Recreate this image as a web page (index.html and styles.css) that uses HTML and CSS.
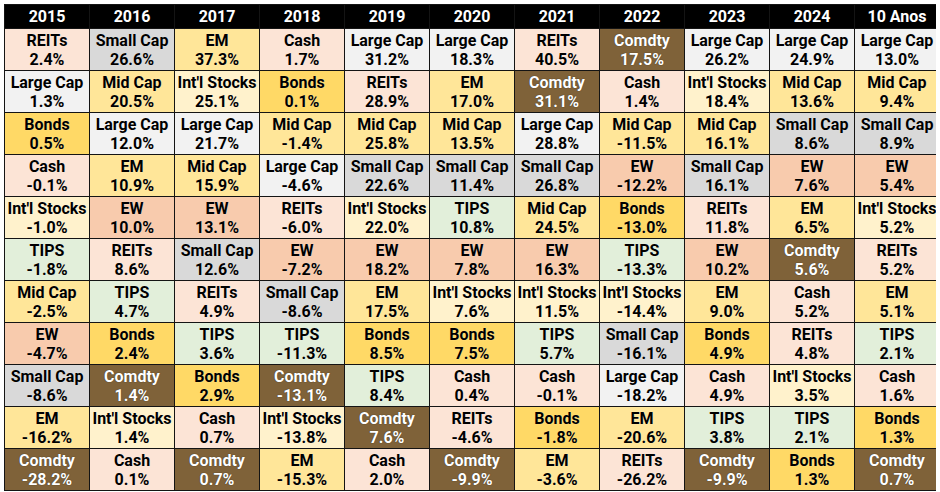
FILE: index.html
```html
<!DOCTYPE html>
<html lang="pt">
<head>
<meta charset="utf-8">
<title>Retornos por classe de ativo</title>
<link rel="stylesheet" href="styles.css">
</head>
<body>
<div class="grid">
  <div class="hd">2015</div><div class="hd">2016</div><div class="hd">2017</div><div class="hd">2018</div><div class="hd">2019</div><div class="hd">2020</div><div class="hd">2021</div><div class="hd">2022</div><div class="hd">2023</div><div class="hd">2024</div><div class="hd">10 Anos</div>

  <div class="c reits">REITs<br>2.4%</div><div class="c small">Small Cap<br>26.6%</div><div class="c em">EM<br>37.3%</div><div class="c cash">Cash<br>1.7%</div><div class="c large">Large Cap<br>31.2%</div><div class="c large">Large Cap<br>18.3%</div><div class="c reits">REITs<br>40.5%</div><div class="c comdty">Comdty<br>17.5%</div><div class="c large">Large Cap<br>26.2%</div><div class="c large">Large Cap<br>24.9%</div><div class="c large">Large Cap<br>13.0%</div>

  <div class="c large">Large Cap<br>1.3%</div><div class="c mid">Mid Cap<br>20.5%</div><div class="c intl">Int'l Stocks<br>25.1%</div><div class="c bonds">Bonds<br>0.1%</div><div class="c reits">REITs<br>28.9%</div><div class="c em">EM<br>17.0%</div><div class="c comdty">Comdty<br>31.1%</div><div class="c cash">Cash<br>1.4%</div><div class="c intl">Int'l Stocks<br>18.4%</div><div class="c mid">Mid Cap<br>13.6%</div><div class="c mid">Mid Cap<br>9.4%</div>

  <div class="c bonds">Bonds<br>0.5%</div><div class="c large">Large Cap<br>12.0%</div><div class="c large">Large Cap<br>21.7%</div><div class="c mid">Mid Cap<br>-1.4%</div><div class="c mid">Mid Cap<br>25.8%</div><div class="c mid">Mid Cap<br>13.5%</div><div class="c large">Large Cap<br>28.8%</div><div class="c mid">Mid Cap<br>-11.5%</div><div class="c mid">Mid Cap<br>16.1%</div><div class="c small">Small Cap<br>8.6%</div><div class="c small">Small Cap<br>8.9%</div>

  <div class="c cash">Cash<br>-0.1%</div><div class="c em">EM<br>10.9%</div><div class="c mid">Mid Cap<br>15.9%</div><div class="c large">Large Cap<br>-4.6%</div><div class="c small">Small Cap<br>22.6%</div><div class="c small">Small Cap<br>11.4%</div><div class="c small">Small Cap<br>26.8%</div><div class="c ew">EW<br>-12.2%</div><div class="c small">Small Cap<br>16.1%</div><div class="c ew">EW<br>7.6%</div><div class="c ew">EW<br>5.4%</div>

  <div class="c intl">Int'l Stocks<br>-1.0%</div><div class="c ew">EW<br>10.0%</div><div class="c ew">EW<br>13.1%</div><div class="c reits">REITs<br>-6.0%</div><div class="c intl">Int'l Stocks<br>22.0%</div><div class="c tips">TIPS<br>10.8%</div><div class="c mid">Mid Cap<br>24.5%</div><div class="c bonds">Bonds<br>-13.0%</div><div class="c reits">REITs<br>11.8%</div><div class="c em">EM<br>6.5%</div><div class="c intl">Int'l Stocks<br>5.2%</div>

  <div class="c tips">TIPS<br>-1.8%</div><div class="c reits">REITs<br>8.6%</div><div class="c small">Small Cap<br>12.6%</div><div class="c ew">EW<br>-7.2%</div><div class="c ew">EW<br>18.2%</div><div class="c ew">EW<br>7.8%</div><div class="c ew">EW<br>16.3%</div><div class="c tips">TIPS<br>-13.3%</div><div class="c ew">EW<br>10.2%</div><div class="c comdty">Comdty<br>5.6%</div><div class="c reits">REITs<br>5.2%</div>

  <div class="c mid">Mid Cap<br>-2.5%</div><div class="c tips">TIPS<br>4.7%</div><div class="c reits">REITs<br>4.9%</div><div class="c small">Small Cap<br>-8.6%</div><div class="c em">EM<br>17.5%</div><div class="c intl">Int'l Stocks<br>7.6%</div><div class="c intl">Int'l Stocks<br>11.5%</div><div class="c intl">Int'l Stocks<br>-14.4%</div><div class="c em">EM<br>9.0%</div><div class="c cash">Cash<br>5.2%</div><div class="c em">EM<br>5.1%</div>

  <div class="c ew">EW<br>-4.7%</div><div class="c bonds">Bonds<br>2.4%</div><div class="c tips">TIPS<br>3.6%</div><div class="c tips">TIPS<br>-11.3%</div><div class="c bonds">Bonds<br>8.5%</div><div class="c bonds">Bonds<br>7.5%</div><div class="c tips">TIPS<br>5.7%</div><div class="c small">Small Cap<br>-16.1%</div><div class="c bonds">Bonds<br>4.9%</div><div class="c reits">REITs<br>4.8%</div><div class="c tips">TIPS<br>2.1%</div>

  <div class="c small">Small Cap<br>-8.6%</div><div class="c comdty">Comdty<br>1.4%</div><div class="c bonds">Bonds<br>2.9%</div><div class="c comdty">Comdty<br>-13.1%</div><div class="c tips">TIPS<br>8.4%</div><div class="c cash">Cash<br>0.4%</div><div class="c cash">Cash<br>-0.1%</div><div class="c large">Large Cap<br>-18.2%</div><div class="c cash">Cash<br>4.9%</div><div class="c intl">Int'l Stocks<br>3.5%</div><div class="c cash">Cash<br>1.6%</div>

  <div class="c em">EM<br>-16.2%</div><div class="c intl">Int'l Stocks<br>1.4%</div><div class="c cash">Cash<br>0.7%</div><div class="c intl">Int'l Stocks<br>-13.8%</div><div class="c comdty">Comdty<br>7.6%</div><div class="c reits">REITs<br>-4.6%</div><div class="c bonds">Bonds<br>-1.8%</div><div class="c em">EM<br>-20.6%</div><div class="c tips">TIPS<br>3.8%</div><div class="c tips">TIPS<br>2.1%</div><div class="c bonds">Bonds<br>1.3%</div>

  <div class="c comdty">Comdty<br>-28.2%</div><div class="c cash">Cash<br>0.1%</div><div class="c comdty">Comdty<br>0.7%</div><div class="c em">EM<br>-15.3%</div><div class="c cash">Cash<br>2.0%</div><div class="c comdty">Comdty<br>-9.9%</div><div class="c em">EM<br>-3.6%</div><div class="c reits">REITs<br>-26.2%</div><div class="c comdty">Comdty<br>-9.9%</div><div class="c bonds">Bonds<br>1.3%</div><div class="c comdty">Comdty<br>0.7%</div>
</div>
</body>
</html>
```

FILE: styles.css
```css
html, body {
  background: #ffffff;
}
body {
  margin: 4px;
  font-family: Roboto, "Liberation Sans", Arial, sans-serif;
}
.grid {
  display: grid;
  grid-template-columns: repeat(11, 84px);
  grid-template-rows: 23px repeat(11, 41px);
  gap: 1px;
  padding: 1px;
  background: #141414;
  width: max-content;
}
.hd {
  background: #000;
  color: #fff;
  font-weight: 700;
  font-size: 16px;
  line-height: 23px;
  text-align: center;
  white-space: nowrap;
}
.c {
  display: flex;
  flex-direction: column;
  justify-content: center;
  align-items: center;
  text-align: center;
  font-weight: 700;
  font-size: 16px;
  line-height: 19px;
  color: #000;
  white-space: nowrap;
  text-shadow: 0 0 1px rgba(255,255,255,0.5);
}
.reits, .cash { background: #fce4d6; }
.small { background: #d9d9d9; }
.large { background: #f2f2f2; }
.em, .mid { background: #ffe699; }
.intl { background: #fff2cc; }
.bonds { background: #ffd966; }
.ew { background: #f8cbad; }
.tips { background: #e2efda; }
.comdty {
  background: #7f6239;
  color: #fff;
  text-shadow: 0 0 1px rgba(0,0,0,0.7);
}
```
